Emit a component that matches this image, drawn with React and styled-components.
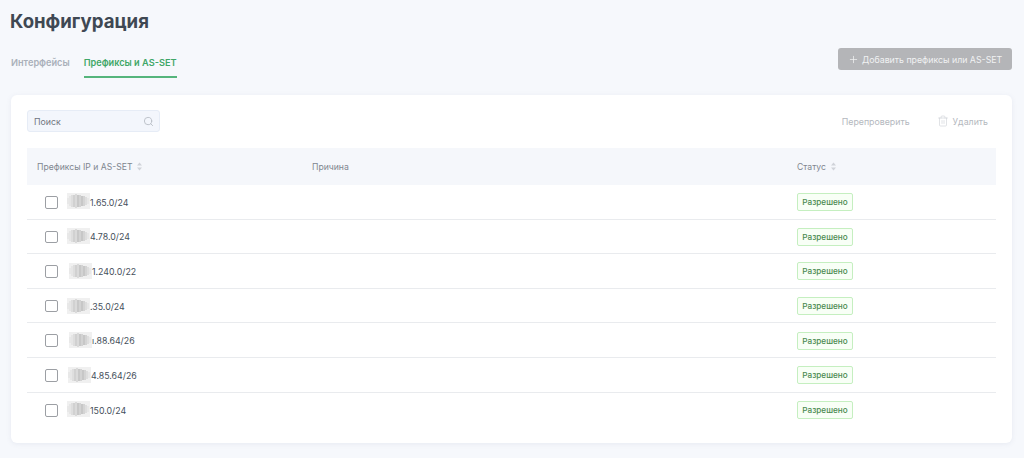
import React from "react";
import styled, { createGlobalStyle } from "styled-components";
import { Search, Plus, Trash2 } from "lucide-react";

const Global = createGlobalStyle`
  html, body { margin: 0; padding: 0; background: #f6f8fc; }
  body { font-family: Inter, "Noto Sans", sans-serif; width: 1024px; height: 458px; overflow: hidden; }
`;

const Page = styled.div`
  display: flex; flex-direction: column;
  padding: 9px 12px 0 10px; height: 458px; box-sizing: border-box;
`;
const Title = styled.h1`
  margin: 0; font-size: 18.6px; line-height: 24px; font-weight: 700; color: #3f4853;
`;
const TopBar = styled.div`
  display: flex; align-items: flex-start; justify-content: space-between;
  margin-top: 15px; height: 47px;
`;
const Tabs = styled.div`display: flex; gap: 14px; padding-top: 2px; padding-left: 1px;`;
const Tab = styled.div`
  font-size: 9.2px; font-weight: 600; line-height: 24px; height: 28px; box-sizing: border-box;
  color: ${p => (p.$active ? "#3fa768" : "#aab0ba")};
  border-bottom: 2px solid ${p => (p.$active ? "#55b57c" : "transparent")};
  padding-top: 1px;
`;
const AddButton = styled.div`
  display: flex; align-items: center; gap: 3px; height: 22px; width: 174px; box-sizing: border-box;
  padding-left: 10px; border-radius: 3px; background: #b4b5b8;
  color: #f1f2f3; font-size: 8.8px; font-weight: 400; white-space: nowrap;
`;
const Card = styled.div`
  margin-left: 1px; background: #fff; border-radius: 6px; height: 348px;
  box-shadow: 0 1px 5px rgba(120, 135, 165, 0.12);
  padding: 15px 16px 0; box-sizing: border-box;
`;
const Toolbar = styled.div`
  display: flex; align-items: center; justify-content: space-between; height: 22px;
`;
const SearchBox = styled.div`
  display: flex; align-items: center; justify-content: space-between; width: 133px; height: 22px;
  box-sizing: border-box; padding: 0 5px 0 6px; background: #f3f6fc;
  border: 1px solid #e6ecf6; border-radius: 3px; font-size: 8.8px; font-weight: 400; color: #6f757f;
`;
const Actions = styled.div`
  display: flex; align-items: center; gap: 27px; padding-right: 8px;
  font-size: 8.8px; font-weight: 400; color: #b4b8be;
`;
const Action = styled.span`display: flex; align-items: center; gap: 4px;`;
const Head = styled.div`
  display: grid; grid-template-columns: 275px 485px 1fr; align-items: center;
  height: 37px; margin-top: 16px; padding-left: 10px; background: #f5f7fb;
  font-size: 8.65px; font-weight: 400; color: #80868f;
`;
const HeadCell = styled.div`display: flex; align-items: center; gap: 5px;`;
const Row = styled.div`
  display: grid; grid-template-columns: 285px 485px 1fr; align-items: center;
  height: 34.6px; box-sizing: border-box; padding-top: 1px; border-bottom: 1px solid #e9ebee;
  &:last-child { border-bottom: none; }
`;
const PrefixCell = styled.div`
  display: flex; align-items: center; padding-left: 18px;
  font-size: 8.8px; font-weight: 400; color: #454f5b;
`;
const Check = styled.span`
  width: 12.5px; height: 12.5px; box-sizing: border-box; flex: none;
  border: 1px solid #9c9fa4; border-radius: 2px; background: #fff;
`;
const Hidden = styled.span`
  flex: none; width: 23px; height: 16px; margin-left: ${p => p.$shift + 9.5}px; margin-top: ${p => p.$up}px;
  display: block;
  svg { display: block; }
`;
const Status = styled.span`
  justify-self: start; display: inline-flex; align-items: center; height: 18px; width: 56px;
  justify-content: center; box-sizing: border-box;
  border: 1px solid #c5efc0; border-radius: 2px; background: #f8fff6;
  font-size: 8.2px; font-weight: 500; color: #4a8a50;
`;

const stripes = [
  [1, 5, 11, "#e2e2e2"], [3, 3, 13, "#dedede"], [5, 2, 14, "#d0d0d0"], [7, 2, 14, "#b8b8b8"],
  [9, 1, 15, "#c8c8c8"], [11, 2, 14, "#a8a8a8"], [13, 2, 14, "#bcbcbc"], [15, 3, 13, "#a6a6a6"],
  [17, 3, 13, "#bebebe"], [19, 4, 12, "#cfcfcf"], [21, 5, 11, "#e0e0e0"],
];

const Redaction = () => (
  <svg width="23" height="16" viewBox="0 0 23 16">
    <rect width="23" height="16" fill="#f0f0f0" />
    <g strokeWidth="1.1">
      {stripes.map(([x, a, b, c]) => (
        <path key={x} d={`M${x} ${a}V${b}`} stroke={c} />
      ))}
    </g>
  </svg>
);

const Sort = () => (
  <svg width="5" height="9" viewBox="0 0 5 9" fill="#d0d3d9">
    <path d="M2.5 0.5 5 3.5H0Z" />
    <path d="M2.5 8.5 5 5.5H0Z" />
  </svg>
);

const rows = [
  { ip: "1.65.0/24", shift: 0, up: -3 },
  { ip: "4.78.0/24", shift: 0, up: -2 },
  { ip: "1.240.0/22", shift: 2, up: -1 },
  { ip: ".35.0/24", shift: 0, up: -1 },
  { ip: "\u0131.88.64/26", shift: 2, up: -2 },
  { ip: "4.85.64/26", shift: 1, up: 0 },
  { ip: "150.0/24", shift: 0, up: -3 },
];

export default function App() {
  return (
    <Page>
      <Global />
      <Title>Конфигурация</Title>
      <TopBar>
        <Tabs>
          <Tab>Интерфейсы</Tab>
          <Tab $active>Префиксы и AS-SET</Tab>
        </Tabs>
        <AddButton><Plus size={11} strokeWidth={1.6} />Добавить префиксы или AS-SET</AddButton>
      </TopBar>
      <Card>
        <Toolbar>
          <SearchBox>Поиск<Search size={11} color="#b9bec6" /></SearchBox>
          <Actions>
            <Action>Перепроверить</Action>
            <Action><Trash2 size={12} strokeWidth={1.1} color="#c8ccd1" />Удалить</Action>
          </Actions>
        </Toolbar>
        <Head>
          <HeadCell>Префиксы IP и AS-SET<Sort /></HeadCell>
          <HeadCell>Причина</HeadCell>
          <HeadCell>Статус<Sort /></HeadCell>
        </Head>
        {rows.map(r => (
          <Row key={r.ip}>
            <PrefixCell>
              <Check />
              <Hidden $shift={r.shift} $up={r.up}><Redaction /></Hidden>
              <span>{r.ip}</span>
            </PrefixCell>
            <span />
            <Status>Разрешено</Status>
          </Row>
        ))}
      </Card>
    </Page>
  );
}
